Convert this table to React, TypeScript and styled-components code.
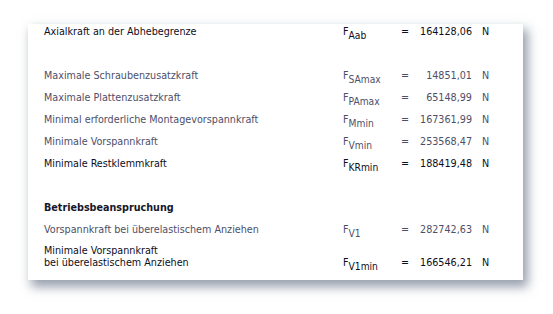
import React from "react";
import styled, { createGlobalStyle } from "styled-components";

type Result = {
  label: string[];
  symbol: string;
  index: string;
  value: string;
  muted?: boolean;
};

const limitRows: Result[] = [
  { label: ["Maximale Schraubenzusatzkraft"], symbol: "F", index: "SAmax", value: "14851,01", muted: true },
  { label: ["Maximale Plattenzusatzkraft"], symbol: "F", index: "PAmax", value: "65148,99", muted: true },
  { label: ["Minimal erforderliche Montagevorspannkraft"], symbol: "F", index: "Mmin", value: "167361,99", muted: true },
  { label: ["Minimale Vorspannkraft"], symbol: "F", index: "Vmin", value: "253568,47", muted: true },
  { label: ["Minimale Restklemmkraft"], symbol: "F", index: "KRmin", value: "188419,48" },
];

const GlobalStyle = createGlobalStyle`
  html, body {
    margin: 0;
    padding: 0;
    background: #ffffff;
  }
  body {
    font-family: "DejaVu Sans Condensed", "DejaVu Sans", "Liberation Sans", sans-serif;
    font-size: 10.7px;
  }
`;

const Page = styled.div`
  width: 553px;
  height: 314px;
  padding: 24px 0 0 28px;
  box-sizing: border-box;
`;

const Card = styled.div`
  width: 495px;
  height: 256px;
  box-sizing: border-box;
  background: #ffffff;
  padding: 0 0 0 16px;
  box-shadow: 4px 6px 10px 1px rgba(70, 84, 108, 0.55);
`;

const Row = styled.div<{ $h?: number; $muted?: boolean; $end?: boolean }>`
  display: grid;
  grid-template-columns: 299px 55px 14px 60px 10px 12px;
  align-items: ${(p) => (p.$end ? "end" : "center")};
  height: ${(p) => p.$h ?? 22}px;
  color: ${(p) => (p.$muted ? "#4e4e68" : "#0d0d1c")};
`;

const Spacer = styled.div<{ $h: number }>`
  height: ${(p) => p.$h}px;
`;

const Label = styled.div`
  line-height: 12px;
  white-space: nowrap;
`;

const Symbol = styled.div`
  line-height: 12px;
  white-space: nowrap;

  sub {
    font-size: 10.2px;
    vertical-align: -4px;
    line-height: 0;
  }
`;

const Eq = styled.div`
  text-align: center;
  line-height: 12px;
`;

const Value = styled.div`
  text-align: right;
  line-height: 12px;
`;

const Unit = styled.div`
  grid-column: 6;
  line-height: 12px;
`;

const Heading = styled.div`
  height: 22px;
  line-height: 22px;
  font-weight: bold;
  color: #16162a;
`;

const ResultRow: React.FC<{ r: Result; h?: number; end?: boolean }> = ({ r, h, end }) => (
  <Row $h={h} $muted={r.muted} $end={end}>
    <Label>
      {r.label.map((line) => (
        <div key={line}>{line}</div>
      ))}
    </Label>
    <Symbol>
      {r.symbol}
      <sub>{r.index}</sub>
    </Symbol>
    <Eq>=</Eq>
    <Value>{r.value}</Value>
    <Unit>N</Unit>
  </Row>
);

export default function App() {
  return (
    <>
      <GlobalStyle />
      <Page>
        <Card>
          <ResultRow
            h={15}
            r={{ label: ["Axialkraft an der Abhebegrenze"], symbol: "F", index: "Aab", value: "164128,06" }}
          />
          <Spacer $h={26} />
          {limitRows.map((r) => (
            <ResultRow key={r.index} r={r} />
          ))}
          <Spacer $h={22} />
          <Heading>Betriebsbeanspruchung</Heading>
          <ResultRow
            r={{ label: ["Vorspannkraft bei überelastischem Anziehen"], symbol: "F", index: "V1", value: "282742,63", muted: true }}
          />
          <ResultRow
            h={28}
            end
            r={{
              label: ["Minimale Vorspannkraft", "bei überelastischem Anziehen"],
              symbol: "F",
              index: "V1min",
              value: "166546,21",
            }}
          />
        </Card>
      </Page>
    </>
  );
}
